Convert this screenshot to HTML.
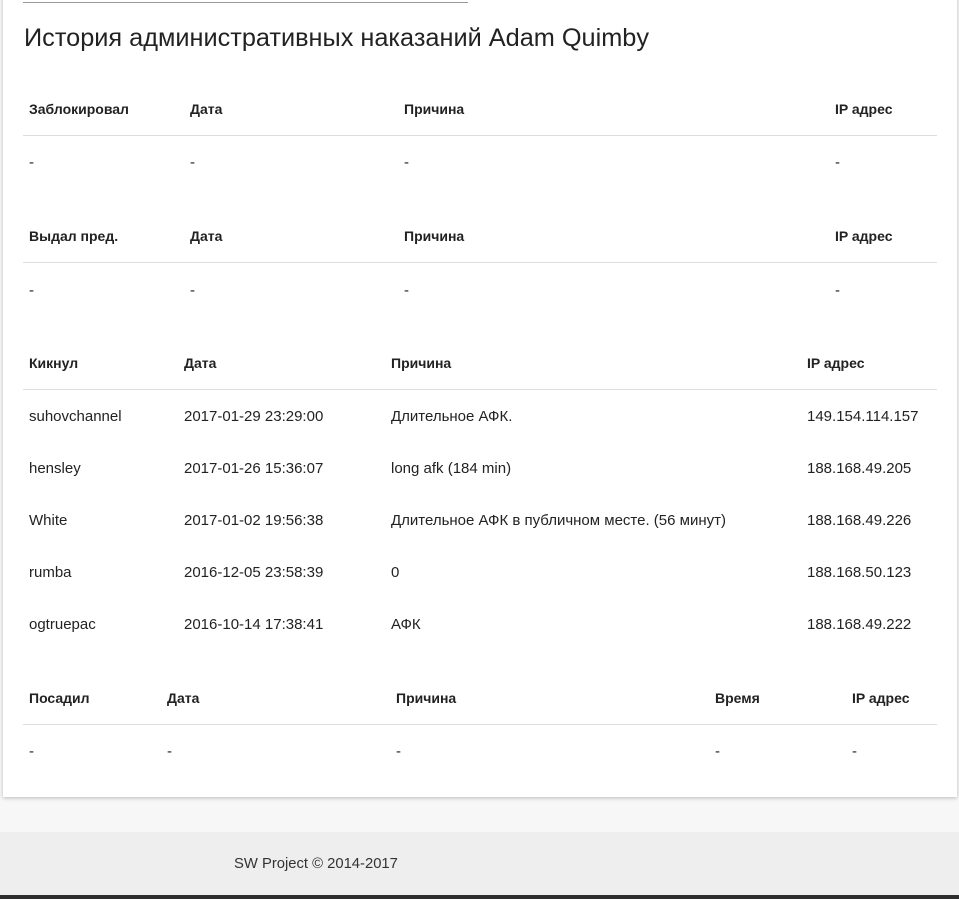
<!DOCTYPE html>
<html><head><meta charset="utf-8"><style>
*{margin:0;padding:0;box-sizing:border-box}
body{width:959px;height:899px;background:#f7f7f7;font-family:"Liberation Sans",sans-serif;color:#222;position:relative;overflow:hidden}
.card{position:absolute;left:3px;top:-5px;width:954px;height:802px;background:#fff;box-shadow:0 1px 4px rgba(0,0,0,.25)}
.topline{position:absolute;left:23px;top:2px;width:445px;height:1px;background:#999}
h1{position:absolute;left:24px;top:24px;font-size:25.3px;font-weight:normal;color:#222;white-space:nowrap}
.t{position:absolute;font-size:15px;white-space:nowrap;line-height:16px}
.d{margin-top:2px}
.h{font-weight:bold;font-size:14px}
.line{position:absolute;left:23px;width:914px;height:1px;background:#ddd}
.footer{position:absolute;left:0;top:832px;width:959px;height:63px;background:#eee}
.dark{position:absolute;left:0;top:895px;width:959px;height:4px;background:#2d2d2d}
</style></head><body>
<div class="card"></div>
<div class="topline"></div>
<h1>История административных наказаний Adam Quimby</h1>

<div class="t h" style="left:29px;top:101px">Заблокировал</div>
<div class="t h" style="left:190px;top:101px">Дата</div>
<div class="t h" style="left:404px;top:101px">Причина</div>
<div class="t h" style="left:835px;top:101px">IP адрес</div>
<div class="line" style="top:135px"></div>
<div class="t d" style="left:29px;top:153px">-</div>
<div class="t d" style="left:190px;top:153px">-</div>
<div class="t d" style="left:404px;top:153px">-</div>
<div class="t d" style="left:835px;top:153px">-</div>

<div class="t h" style="left:29px;top:228px">Выдал пред.</div>
<div class="t h" style="left:190px;top:228px">Дата</div>
<div class="t h" style="left:404px;top:228px">Причина</div>
<div class="t h" style="left:835px;top:228px">IP адрес</div>
<div class="line" style="top:262px"></div>
<div class="t d" style="left:29px;top:281px">-</div>
<div class="t d" style="left:190px;top:281px">-</div>
<div class="t d" style="left:404px;top:281px">-</div>
<div class="t d" style="left:835px;top:281px">-</div>

<div class="t h" style="left:29px;top:355px">Кикнул</div>
<div class="t h" style="left:184px;top:355px">Дата</div>
<div class="t h" style="left:391px;top:355px">Причина</div>
<div class="t h" style="left:807px;top:355px">IP адрес</div>
<div class="line" style="top:389px"></div>
<div class="t d" style="left:29px;top:407px">suhovchannel</div>
<div class="t d" style="left:184px;top:407px">2017-01-29 23:29:00</div>
<div class="t d" style="left:391px;top:407px">Длительное АФК.</div>
<div class="t d" style="left:807px;top:407px">149.154.114.157</div>
<div class="t d" style="left:29px;top:459px">hensley</div>
<div class="t d" style="left:184px;top:459px">2017-01-26 15:36:07</div>
<div class="t d" style="left:391px;top:459px">long afk (184 min)</div>
<div class="t d" style="left:807px;top:459px">188.168.49.205</div>
<div class="t d" style="left:29px;top:511px">White</div>
<div class="t d" style="left:184px;top:511px">2017-01-02 19:56:38</div>
<div class="t d" style="left:391px;top:511px">Длительное АФК в публичном месте. (56 минут)</div>
<div class="t d" style="left:807px;top:511px">188.168.49.226</div>
<div class="t d" style="left:29px;top:563px">rumba</div>
<div class="t d" style="left:184px;top:563px">2016-12-05 23:58:39</div>
<div class="t d" style="left:391px;top:563px">0</div>
<div class="t d" style="left:807px;top:563px">188.168.50.123</div>
<div class="t d" style="left:29px;top:615px">ogtruepac</div>
<div class="t d" style="left:184px;top:615px">2016-10-14 17:38:41</div>
<div class="t d" style="left:391px;top:615px">АФК</div>
<div class="t d" style="left:807px;top:615px">188.168.49.222</div>

<div class="t h" style="left:29px;top:690px">Посадил</div>
<div class="t h" style="left:167px;top:690px">Дата</div>
<div class="t h" style="left:396px;top:690px">Причина</div>
<div class="t h" style="left:715px;top:690px">Время</div>
<div class="t h" style="left:852px;top:690px">IP адрес</div>
<div class="line" style="top:724px"></div>
<div class="t d" style="left:29px;top:742px">-</div>
<div class="t d" style="left:167px;top:742px">-</div>
<div class="t d" style="left:396px;top:742px">-</div>
<div class="t d" style="left:715px;top:742px">-</div>
<div class="t d" style="left:852px;top:742px">-</div>

<div class="footer"></div>
<div class="t" style="left:234px;top:856px;color:#333;font-size:14.8px">SW Project © 2014-2017</div>
<div class="dark"></div>
</body></html>
